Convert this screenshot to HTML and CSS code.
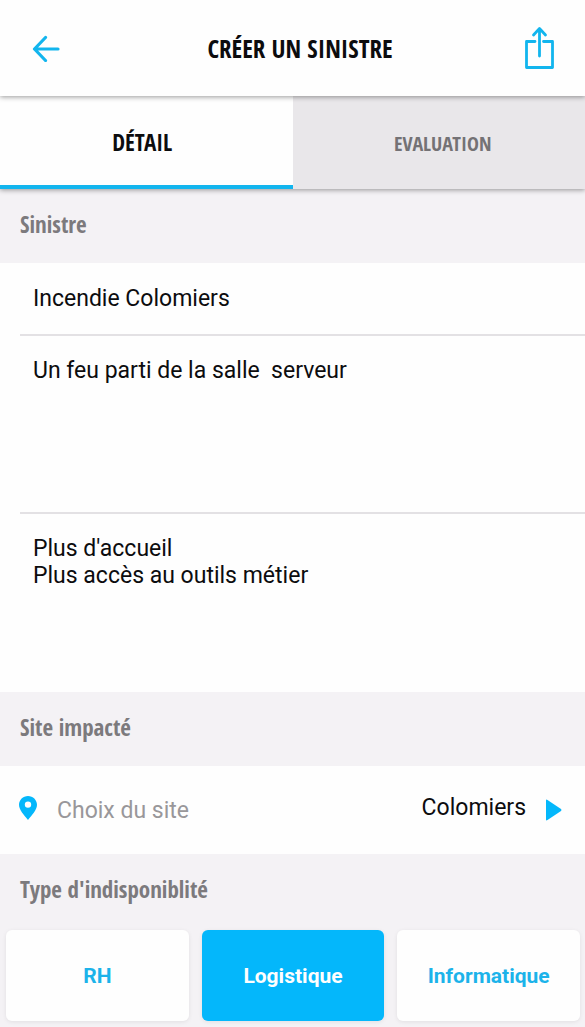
FILE: index.html
```html
<!DOCTYPE html>
<html lang="fr">
<head>
<meta charset="utf-8">
<meta name="viewport" content="width=device-width, initial-scale=1">
<title>Créer un sinistre</title>
<link rel="stylesheet" href="styles.css">
</head>
<body>
<header class="topbar">
  <button class="icon-button back" type="button" aria-label="Retour">
    <svg width="28" height="28" viewBox="0 0 28 28" fill="none" stroke="currentColor" stroke-width="3.200" stroke-linecap="round" stroke-linejoin="round"><path d="M26 15H2.500M13.500 3.500L2.500 15L13.500 26.500"/></svg>
  </button>
  <h1 class="title">CRÉER UN SINISTRE</h1>
  <button class="icon-button" type="button" aria-label="Partager">
    <svg width="32" height="44" viewBox="0 0 32 44" fill="none" stroke="currentColor" stroke-width="2.800" stroke-linecap="round" stroke-linejoin="round"><path d="M11 15.500H2.500V41.500H28.500V15.500H19.500M15.500 30V3M9.500 9L15.500 2.500L21.500 9"/></svg>
  </button>
</header>
<nav class="tabs" role="tablist">
  <button class="tab tab-active" type="button" role="tab" aria-selected="true">DÉTAIL</button>
  <button class="tab" type="button" role="tab" aria-selected="false">EVALUATION</button>
</nav>
<main>
  <h2 class="section-title">Sinistre</h2>
  <div class="fields">
    <input class="field" type="text" aria-label="Nom du sinistre" value="Incendie Colomiers">
    <textarea class="field field-area" aria-label="Description">Un feu parti de la salle  serveur</textarea>
    <textarea class="field field-area" aria-label="Conséquences">Plus d'accueil
Plus accès au outils métier</textarea>
  </div>
  <h2 class="section-title">Site impacté</h2>
  <button class="site-row" type="button">
    <svg class="pin" width="18" height="24" viewBox="0 0 18 24" fill="currentColor"><path fill-rule="evenodd" d="M9 0C4 0 0 4 0 8.800C0 14 5 19 9 24C13 19 18 14 18 8.800C18 4 14 0 9 0ZM9 5.400A3.200 3.200 0 1 1 9 11.800A3.200 3.200 0 1 1 9 5.400Z"/></svg>
    <span class="site-label">Choix du site</span>
    <span class="site-value">Colomiers</span>
    <svg class="caret" width="16" height="22" viewBox="0 0 16 22" fill="currentColor"><path d="M0 1.500Q0 0 1.500 1L15 10Q16 11 15 12L1.500 21Q0 22 0 20.500Z"/></svg>
  </button>
  <h2 class="section-title">Type d'indisponiblité</h2>
  <div class="types">
    <button class="type" type="button" aria-pressed="false">RH</button>
    <button class="type type-active" type="button" aria-pressed="true">Logistique</button>
    <button class="type" type="button" aria-pressed="false">Informatique</button>
  </div>
</main>
</body>
</html>
```
FILE: styles.css
```css
* {
  box-sizing: border-box;
}

body {
  margin: 0;
  background: #f4f2f5;
  color: #0c0c0e;
  font-family: Roboto, sans-serif;
  font-size: 23px;
}

button {
  border: 0;
  margin: 0;
  background: none;
  font: inherit;
}

svg {
  display: block;
}

.topbar {
  position: relative;
  display: flex;
  align-items: center;
  justify-content: space-between;
  height: 96px;
  padding: 0 29px 0 32px;
  background: #fefefe;
  box-shadow: 0 1px 5px rgba(0, 0, 0, 0.4);
}

.icon-button {
  padding: 0;
  color: #12b5ee;
}

.back {
  padding-right: 16px;
}

.title,
.tab,
.section-title {
  font-family: "Open Sans Condensed", "Liberation Sans Narrow", "Open Sans", sans-serif;
  font-weight: 700;
}

.title {
  margin: 0;
  font-size: 25px;
}

.tabs {
  display: grid;
  grid-template-columns: 1fr 1fr;
  height: 93px;
  box-shadow: 0 1px 5px rgba(0, 0, 0, 0.4);
}

.tab {
  padding: 2px 0 0 8px;
  background: #e9e7ea;
  color: #747275;
  font-size: 20px;
}

.tab-active {
  padding: 2px 8px 0 0;
  border-bottom: 4px solid #12b5ee;
  background: #fefefe;
  color: #0c0c0e;
  font-size: 23px;
}

.section-title {
  margin: 0;
  padding: 18px 20px 22px;
  color: #7c7a7d;
  font-size: 23px;
  line-height: 34px;
}

.fields {
  display: flex;
  flex-direction: column;
  padding-left: 20px;
  background: #fefefe;
}

.field {
  display: block;
  width: 100%;
  height: 73px;
  padding: 0 13px;
  border: 0;
  border-bottom: 2px solid #e3e1e4;
  background: none;
  color: inherit;
  font: inherit;
  line-height: 27px;
}

.field-area {
  height: 178px;
  padding-top: 21px;
  resize: none;
}

.field:last-child {
  border-bottom: 0;
}

.site-row {
  display: flex;
  align-items: center;
  width: 100%;
  height: 88px;
  padding: 0 23px 0 19px;
  background: #fefefe;
  color: #0c0c0e;
}

.pin,
.caret {
  flex: none;
  color: #04b7fb;
}

.pin {
  margin-bottom: 4px;
}

.site-label {
  margin-left: 20px;
  color: #99979a;
}

.site-value {
  margin: 0 20px 6px auto;
}

.types {
  display: grid;
  grid-template-columns: repeat(3, 1fr);
  gap: 13px;
  padding: 2px 5px 6px 6px;
}

.type {
  height: 91px;
  padding: 0;
  border-radius: 6px;
  background: #fefefe;
  box-shadow: 0 1px 4px rgba(0, 0, 0, 0.08);
  color: #1cb3ea;
  font-size: 21px;
  font-weight: 700;
}

.type-active {
  background: #04b7fb;
  color: #fefefe;
}
```
